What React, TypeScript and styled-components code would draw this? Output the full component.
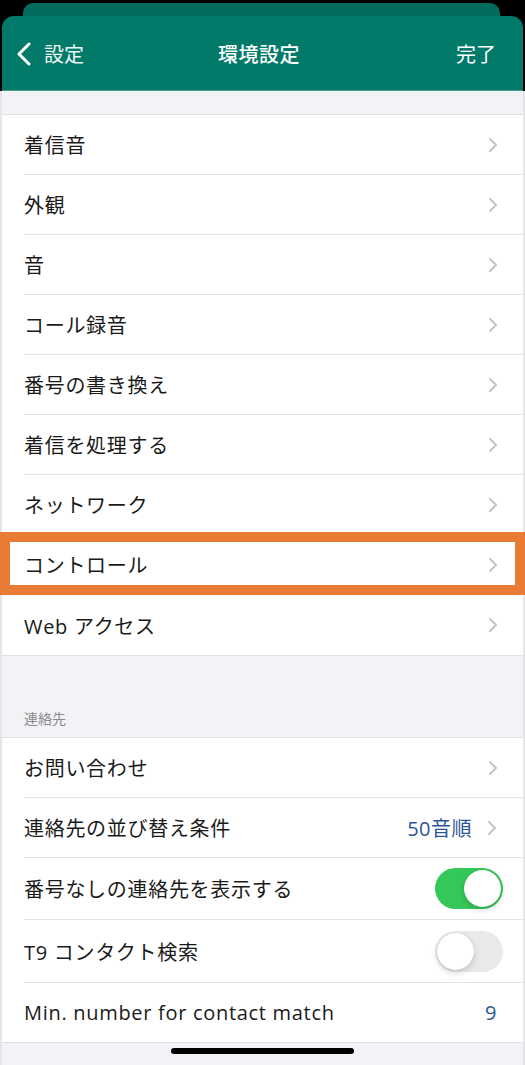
import React, { useState } from 'react';
import styled, { createGlobalStyle } from 'styled-components';

const GlobalStyle = createGlobalStyle`
  html, body {
    margin: 0;
    padding: 0;
    background: #000;
  }
  body {
    font-family: 'Open Sans', 'Noto Sans CJK JP', sans-serif;
    -webkit-font-smoothing: antialiased;
  }
`;

const mainRows = [
  '着信音',
  '外観',
  '音',
  'コール録音',
  '番号の書き換え',
  '着信を処理する',
  'ネットワーク',
  'コントロール',
  'Web アクセス',
];

const Chevron: React.FC = () => (
  <svg width='10' height='16' viewBox='0 0 10 16'>
    <polyline
      points='2,2 8,8 2,14'
      fill='none'
      stroke='#c4c4c8'
      strokeWidth='2'
      strokeLinecap='round'
      strokeLinejoin='round'
    />
  </svg>
);

const App: React.FC = () => {
  const [showEmpty, setShowEmpty] = useState(true);
  const [t9, setT9] = useState(false);

  return (
    <>
      <GlobalStyle />
      <Page>
        <BackCard />
        <Header>
          <BackButton>
            <svg width='16' height='24' viewBox='0 0 16 24'>
              <polyline
                points='13,2 3,12 13,22'
                fill='none'
                stroke='#fff'
                strokeWidth='3'
                strokeLinecap='round'
                strokeLinejoin='round'
              />
            </svg>
            <span>設定</span>
          </BackButton>
          <HeaderTitle>環境設定</HeaderTitle>
          <HeaderAction>完了</HeaderAction>
        </Header>
        <Body>
          <TopGap />
          <Group>
            {mainRows.map((label, i) => (
              <Row key={label} last={i === mainRows.length - 1}>
                <Label>{label}</Label>
                <Chevron />
                {label === 'コントロール' && <Highlight />}
              </Row>
            ))}
          </Group>
          <SectionTitle>連絡先</SectionTitle>
          <Group>
            <Row>
              <Label>お問い合わせ</Label>
              <Chevron />
            </Row>
            <Row>
              <Label>連絡先の並び替え条件</Label>
              <Value>
                50音順
                <Chevron />
              </Value>
            </Row>
            <Row height={62}>
              <Label>番号なしの連絡先を表示する</Label>
              <Toggle on={showEmpty} onClick={() => setShowEmpty(!showEmpty)}>
                <Knob on={showEmpty} />
              </Toggle>
            </Row>
            <Row height={63}>
              <Label>T9 コンタクト検索</Label>
              <Toggle on={t9} onClick={() => setT9(!t9)}>
                <Knob on={t9} />
              </Toggle>
            </Row>
            <Row height={59} last>
              <Label>Min. number for contact match</Label>
              <Value>9</Value>
            </Row>
          </Group>
          <HomeArea>
            <HomeIndicator />
          </HomeArea>
        </Body>
      </Page>
    </>
  );
};

export default App;

const Page = styled.div`
  width: 525px;
  min-height: 1065px;
  background: #000;
  padding-top: 3px;
  box-sizing: border-box;
`;

const BackCard = styled.div`
  height: 13px;
  margin: 0 25px 0 23px;
  background: #036b5b;
  border-radius: 10px 10px 0 0;
`;

const Header = styled.div`
  height: 74px;
  margin: 0 2px;
  background: #027a69;
  border-radius: 12px 12px 0 0;
  border-bottom: 1px solid #3f9f8f;
  display: grid;
  grid-template-columns: 1fr auto 1fr;
  align-items: center;
  color: #fff;
  font-size: 20px;
  padding: 0 27px 0 14px;
`;

const BackButton = styled.div`
  display: flex;
  align-items: center;
  gap: 12px;
  color: #eef6f4;
  svg {
    margin-top: 1px;
  }
`;

const HeaderTitle = styled.div`
  font-weight: 500;
  font-size: 20px;
  letter-spacing: 0.5px;
  margin-left: 6px;
`;

const HeaderAction = styled.div`
  justify-self: end;
  font-size: 20px;
`;

const Body = styled.div`
  background: #f2f2f7;
  border-left: 2px solid #e6e6e9;
  border-right: 2px solid #e6e6e9;
  min-height: 975px;
`;

const TopGap = styled.div`
  height: 23px;
  border-bottom: 1px solid #e1e1e5;
`;

const Group = styled.div`
  background: #fff;
  border-bottom: 1px solid #e1e1e5;
`;

const Row = styled.div<{ last?: boolean; height?: number }>`
  position: relative;
  height: ${(p) => (p.height ? p.height : 60)}px;
  margin-left: 22px;
  padding-right: 25px;
  display: flex;
  align-items: center;
  justify-content: space-between;
  box-sizing: border-box;
  border-bottom: ${(p) => (p.last ? 'none' : '1px solid #e4e4e7')};
`;

const Label = styled.div`
  font-size: 20px;
  color: #1a1a1a;
  letter-spacing: 0.7px;
`;

const Value = styled.div`
  display: flex;
  align-items: center;
  gap: 15px;
  font-size: 20px;
  letter-spacing: 0.5px;
  color: #2c5596;
  margin-right: 1px;
`;

const Highlight = styled.div`
  position: absolute;
  left: -24px;
  right: -2px;
  top: -3px;
  bottom: -1px;
  border: 10px solid #e87c34;
  pointer-events: none;
`;

const SectionTitle = styled.div`
  height: 82px;
  box-sizing: border-box;
  padding: 52px 0 0 22px;
  font-size: 14px;
  color: #8a8a8e;
  border-bottom: 1px solid #e1e1e5;
`;

const Toggle = styled.div<{ on: boolean }>`
  width: 68px;
  height: 41px;
  border-radius: 21px;
  background: ${(p) => (p.on ? '#34c759' : '#e9e9eb')};
  display: flex;
  align-items: center;
  padding: 2px;
  box-sizing: border-box;
  justify-content: ${(p) => (p.on ? 'flex-end' : 'flex-start')};
  cursor: pointer;
  margin-right: -5px;
`;

const Knob = styled.div<{ on: boolean }>`
  width: 37px;
  height: 37px;
  border-radius: 50%;
  background: #fff;
  box-shadow: 0 3px 6px rgba(0, 0, 0, 0.15), 0 0 1px rgba(0, 0, 0, 0.2);
`;

const HomeArea = styled.div`
  height: 22px;
  display: flex;
  justify-content: center;
  padding-top: 5px;
  box-sizing: border-box;
`;

const HomeIndicator = styled.div`
  width: 183px;
  height: 6px;
  border-radius: 3px;
  background: #000;
`;
